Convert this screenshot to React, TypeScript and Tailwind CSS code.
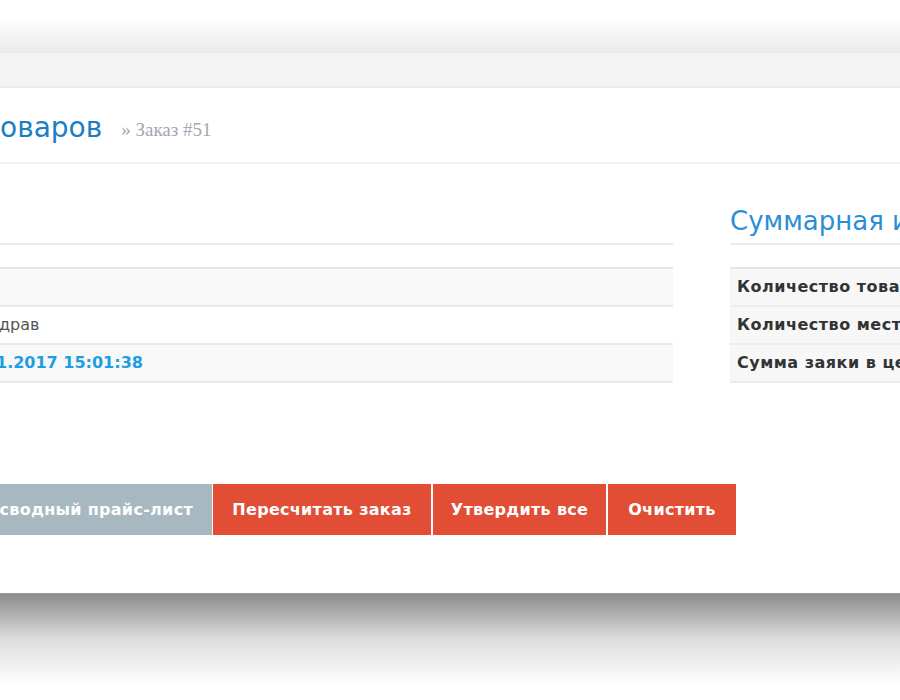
const summaryRows = ['Количество товаров', 'Количество мест', 'Сумма заяки в целом'];

// only the tail of each cell fits into view on the left edge
const orderRows = [
  { text: '', tone: 'plain' },
  { text: 'драв', tone: 'plain' },
  { text: '1.2017 15:01:38', tone: 'date' },
];

export default function App() {
  return (
    <div className="w-[900px] h-[700px] overflow-hidden bg-white font-['DejaVu_Sans',sans-serif]">
      <div className="h-[18px]" />
      <div className="h-[35px] bg-gradient-to-b from-white to-[#eaeaea]" />
      <div className="h-[35px] bg-[#f4f4f4] border-b-2 border-[#ebebeb]" />

      <header className="h-[76px] flex items-center gap-[19px] pt-[6px] border-b-2 border-[#f1f1f1] whitespace-nowrap">
        <h1 className="text-[28px] text-[#1b7fc3] leading-none">оваров</h1>
        <span className="font-['Liberation_Serif',serif] text-[19px] text-[#a3a7b3] pt-[4px]">» Заказ #51</span>
      </header>

      <main className="flex gap-[57px] h-[428px]">
        <section className="w-[673px] shrink-0">
          <div className="h-[81px] border-b-2 border-[#e3edf6]" />
          <div className="mt-[22px] border-t-2 border-[#e6e6e6]">
            {orderRows.map((r, i) => (
              <div
                key={i}
                className={`h-[38px] flex items-center border-b-2 border-[#e9e9e9] whitespace-nowrap ${i % 2 === 0 ? 'bg-[#f8f8f8]' : 'bg-white'}`}
              >
                {r.tone === 'date' ? (
                  <span className="-ml-[4px] text-[16px] font-bold text-[#1c9fe2]">{r.text}</span>
                ) : (
                  <span className="-ml-[1px] text-[16px] text-[#555]">{r.text}</span>
                )}
              </div>
            ))}
          </div>
        </section>

        <section className="flex-1 min-w-0 overflow-hidden">
          <div className="h-[81px] border-b-2 border-[#e3edf6] flex items-end pb-[9px]">
            <h2 className="text-[26px] text-[#2c8ed6] leading-none whitespace-nowrap">Суммарная информация</h2>
          </div>
          <div className="mt-[22px] border-t-2 border-[#e6e6e6]">
            {summaryRows.map((t) => (
              <div
                key={t}
                className="h-[38px] flex items-center px-[7px] bg-[#f7f7f7] border-b-2 border-[#ececec] text-[16px] font-bold tracking-[0.5px] text-[#333] whitespace-nowrap"
              >
                {t}
              </div>
            ))}
          </div>
        </section>
      </main>

      <div className="-mt-[108px] flex h-[51px] text-[16px] font-bold tracking-[0.3px] text-white whitespace-nowrap">
        <div className="w-[212px] h-full bg-[#a8b8c1] flex items-center justify-end pr-[19px]">
          сводный прайс-лист
        </div>
        <button className="ml-px w-[218px] h-full bg-[#e14d35]">Пересчитать заказ</button>
        <button className="ml-[2px] w-[173px] h-full bg-[#e14d35]">Утвердить все</button>
        <button className="ml-[2px] w-[128px] h-full bg-[#e14d35]">Очистить</button>
      </div>

      <div className="mt-[58px] h-px bg-[#9a9a9a]" />
      <div className="h-[88px] bg-gradient-to-b from-[#8c8c8c] via-[#dcdcdc] to-[#fdfdfd]" />
    </div>
  );
}
